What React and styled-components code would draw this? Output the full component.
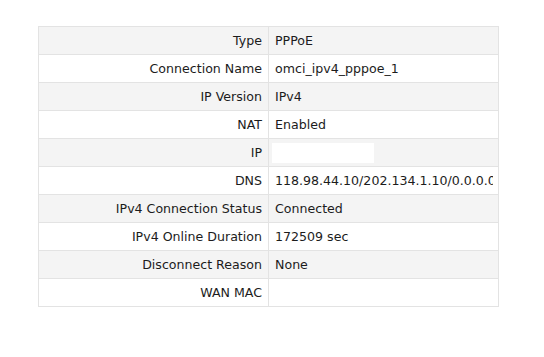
import styled, { createGlobalStyle } from 'styled-components';

const GlobalStyle = createGlobalStyle`
  body {
    margin: 0;
    background: #ffffff;
    font-family: "DejaVu Sans", Verdana, sans-serif;
  }
`;

const Page = styled.div`
  width: 544px;
  height: 357px;
  padding: 26px 0 0 38px;
  box-sizing: border-box;
`;

const Table = styled.table`
  width: 460px;
  border-collapse: collapse;
  table-layout: fixed;
  font-size: 12.6px;
  color: #1c1c1c;
`;

const Col = styled.col`
  width: ${props => props.$w}px;
`;

const Row = styled.tr`
  height: 28px;
  background: ${props => props.$odd ? '#f4f4f4' : '#ffffff'};
`;

const Label = styled.td`
  padding: 0 6px 0 0;
  text-align: right;
  border: 1px solid #e3e3e3;
  white-space: nowrap;
`;

const Value = styled.td`
  padding: 0 5px 0 6px;
  border: 1px solid #e3e3e3;
  white-space: nowrap;
  overflow: hidden;
`;

const Clip = styled.div`
  overflow: hidden;
  white-space: nowrap;
`;

const Blank = styled.div`
  width: 102px;
  height: 20px;
  margin-left: -3px;
  background: #ffffff;
`;

const rows = [
  ['Type', 'PPPoE'],
  ['Connection Name', 'omci_ipv4_pppoe_1'],
  ['IP Version', 'IPv4'],
  ['NAT', 'Enabled'],
  ['IP', null],
  ['DNS', '118.98.44.10/202.134.1.10/0.0.0.0'],
  ['IPv4 Connection Status', 'Connected'],
  ['IPv4 Online Duration', '172509 sec'],
  ['Disconnect Reason', 'None'],
  ['WAN MAC', ''],
];

const App = () => (
  <>
    <GlobalStyle />
    <Page>
      <Table>
        <colgroup>
          <Col $w={230} />
          <Col $w={230} />
        </colgroup>
        <tbody>
          {rows.map(([label, value], i) => (
            <Row key={label} $odd={i % 2 === 0}>
              <Label>{label}</Label>
              <Value>
                {value === null ? <Blank /> : <Clip>{value}</Clip>}
              </Value>
            </Row>
          ))}
        </tbody>
      </Table>
    </Page>
  </>
);

export default App;
